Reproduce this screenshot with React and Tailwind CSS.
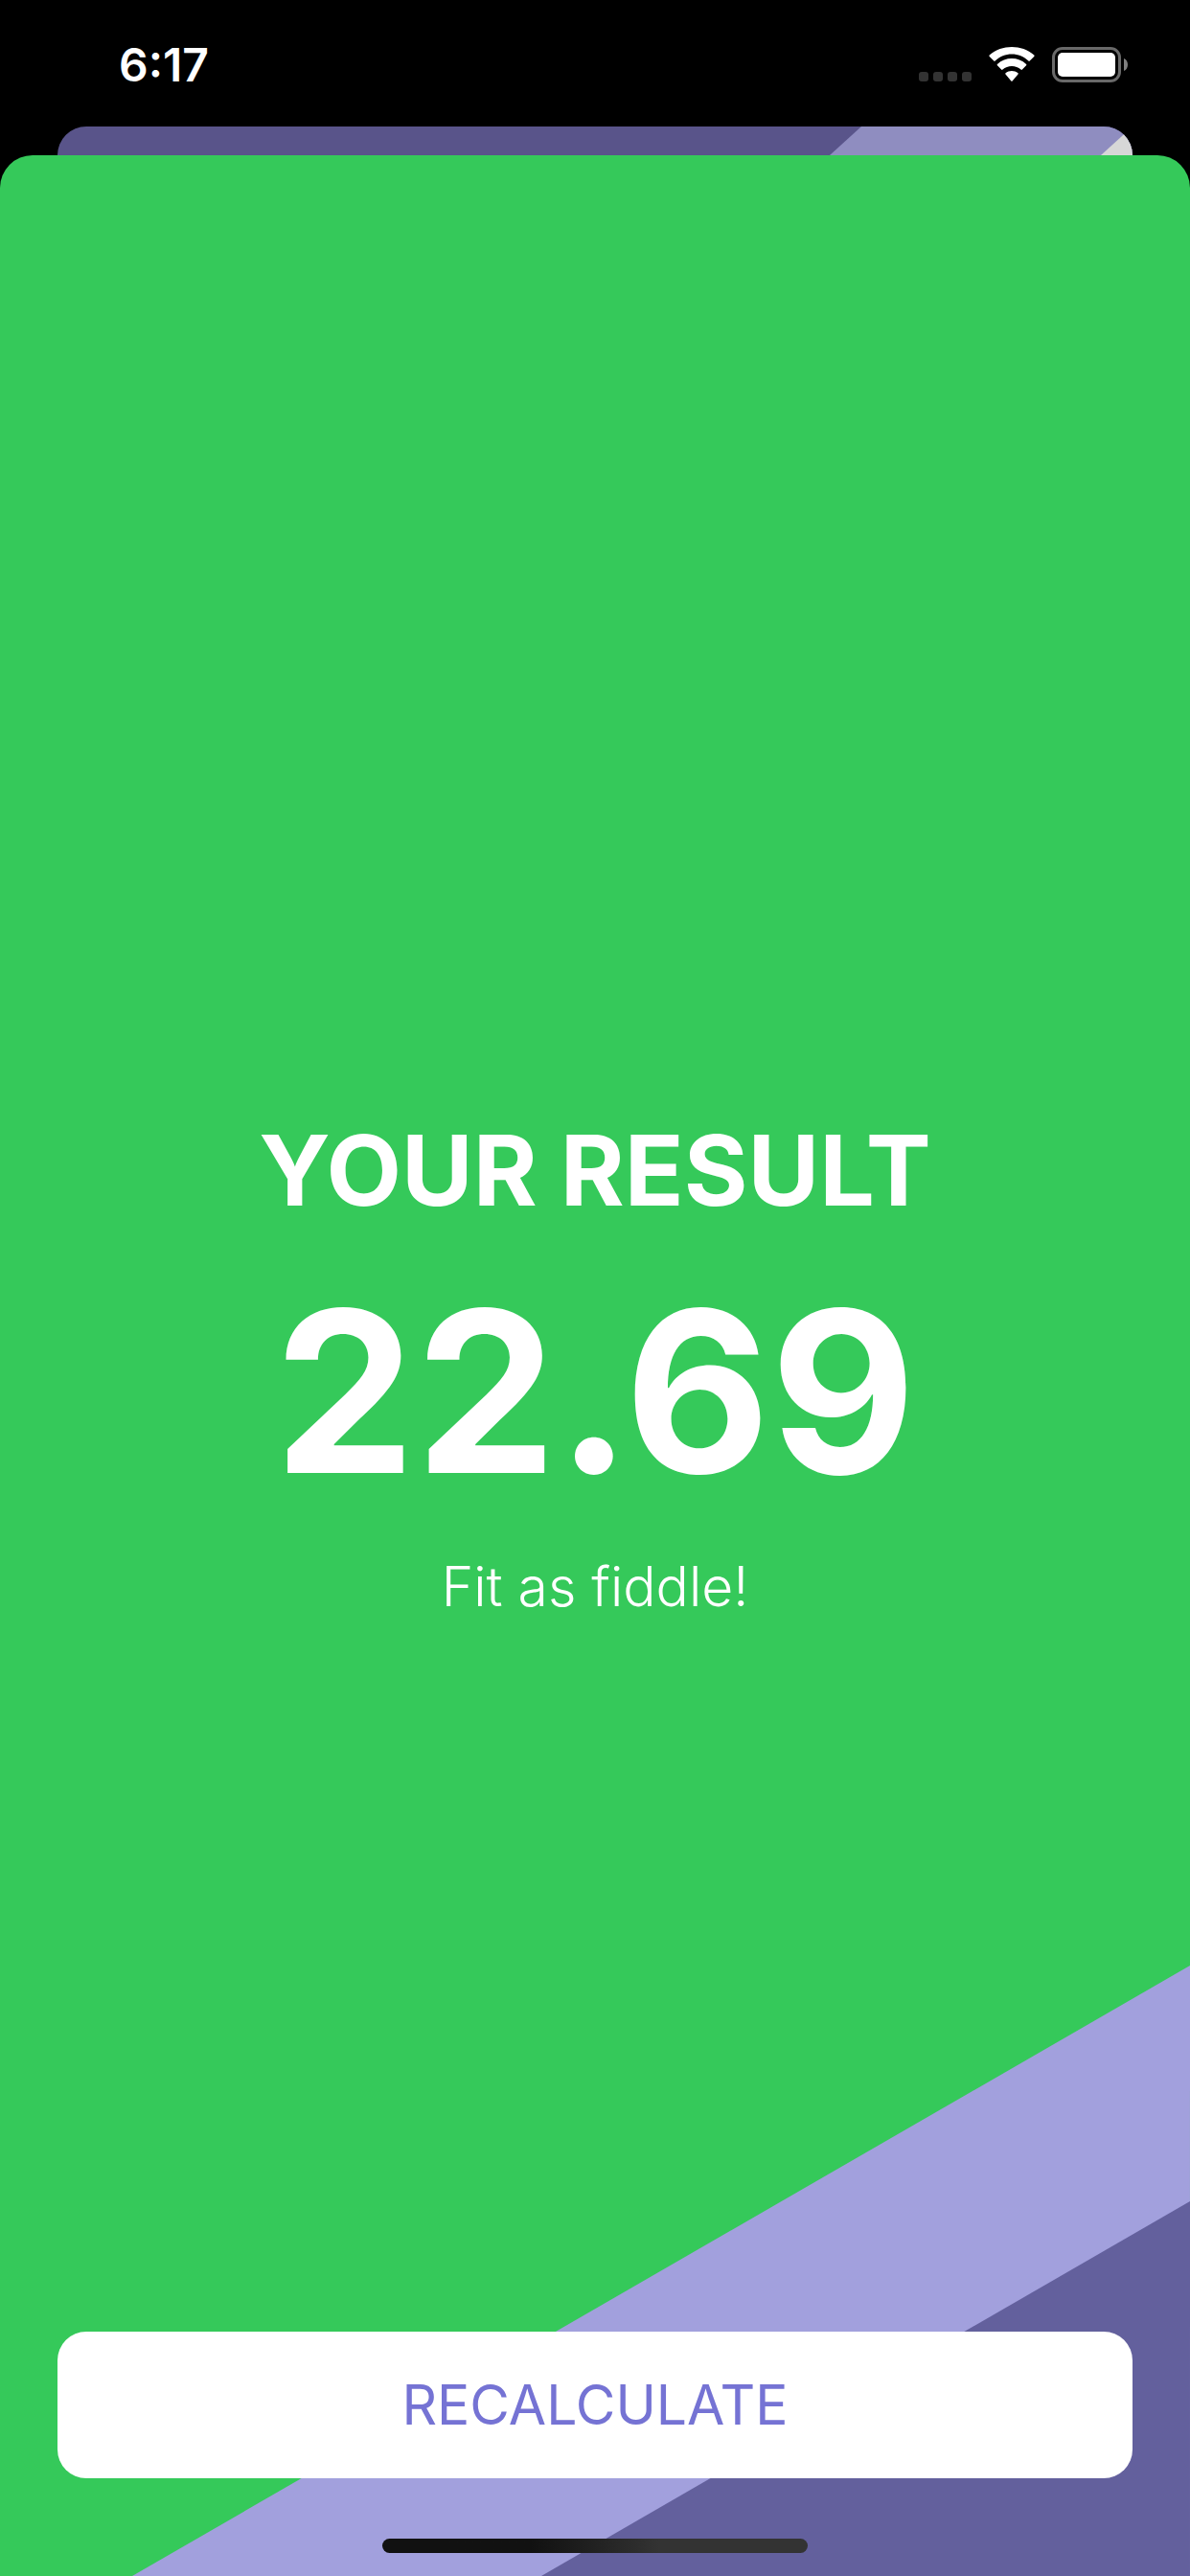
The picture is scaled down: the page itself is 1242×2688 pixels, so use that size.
function StatusBar() {
  return (
    <div className="flex h-33 items-start justify-between pt-12 pr-16 pl-31 text-white">
      <time className="text-[48px] leading-10 font-semibold">6:17</time>
      <div className="flex h-10 items-start gap-4">
        <div className="mt-[27px] mr-0.5 flex gap-[5px]" aria-hidden="true">
          <span className="size-2.5 rounded-[3px] bg-[#333333]" />
          <span className="size-2.5 rounded-[3px] bg-[#333333]" />
          <span className="size-2.5 rounded-[3px] bg-[#333333]" />
          <span className="size-2.5 rounded-[3px] bg-[#333333]" />
        </div>
        <svg className="mt-px h-9 w-12" viewBox="0 0 48 36" fill="#fff" role="img" aria-label="Wi-Fi">
          <path d="M24 7.6c6.5 0 12.700 2.500 17.400 7 .4.4.9.4 1.300 0l4.600-4.700c.4-.4.4-1 0-1.400C34.300-2.800 13.700-2.800.7 8.500c-.4.4-.4 1 0 1.400l4.600 4.700c.4.4.9.4 1.300 0 4.700-4.500 10.900-7 17.400-7Z" />
          <path d="M24 19.900c3.500 0 6.900 1.300 9.500 3.700.4.4 1 .4 1.400 0l4.200-4.300c.4-.4.4-1 0-1.400-8.500-7.900-21.700-7.900-30.200 0-.4.4-.4 1 0 1.400l4.200 4.300c.4.4 1 .4 1.400 0 2.600-2.400 6-3.700 9.500-3.700Z" />
          <path d="M30.500 28.600c.4-.4.4-1 0-1.300-3.800-3.200-9.300-3.200-13 0-.4.400-.4 1 0 1.300l5.800 6.900c.4.4.9.4 1.300 0l5.900-6.900Z" />
        </svg>
        <svg className="mt-px ml-0.5 h-[37px] w-[80px]" viewBox="0 0 80 37" role="img" aria-label="Battery full">
          <rect x="1.500" y="1.500" width="69" height="34" rx="9.500" fill="none" stroke="#696969" strokeWidth="3" />
          <rect x="6" y="6" width="60" height="25" rx="5" fill="#fff" />
          <path d="M75 12c2.700 1.200 4 3.600 4 6.500s-1.300 5.300-4 6.500Z" fill="#808080" />
        </svg>
      </div>
    </div>
  );
}

function PreviousCard() {
  return (
    <div className="mx-15 flex h-15 justify-end overflow-hidden rounded-t-[30px] bg-[#59548a]">
      <svg className="h-15 w-[349px]" viewBox="0 0 349 60" aria-hidden="true">
        <path d="M349 0H66L0 60h349Z" fill="#8f8dc0" />
        <path d="M349 0 283 60h66Z" fill="#d7d7d7" />
      </svg>
    </div>
  );
}

function Stripes() {
  return (
    <svg
      className="absolute right-0 bottom-0 w-8/9"
      viewBox="0 0 1104 637"
      aria-hidden="true"
    >
      <path d="M0 637 1104 0v637Z" fill="#a2a0dd" />
      <path d="M427 637 1104 246v391Z" fill="#63609d" />
    </svg>
  );
}

export default function App() {
  return (
    <div className="flex min-h-screen flex-col bg-black font-['Inter','Liberation_Sans',sans-serif]">
      <StatusBar />
      <PreviousCard />
      <main className="relative -mt-7.5 grid flex-1 grid-rows-[1fr_auto_1fr] overflow-hidden rounded-t-[34px] bg-[#35c95a] px-15">
        <Stripes />
        <section className="relative row-start-2 flex flex-col items-center gap-7 text-center text-white">
          <h1 className="text-[102px] leading-[126px] font-bold">YOUR RESULT</h1>
          <p className="text-[234px] leading-[280px] font-bold">22.69</p>
          <p className="text-[57px] leading-[72px] font-light">Fit as fiddle!</p>
        </section>
        <footer className="relative row-start-3 flex flex-col items-center justify-end pb-6">
          <button
            type="button"
            className="h-[153px] w-full rounded-[30px] bg-white text-[57px] leading-[72px] text-[#7573d4]"
          >
            RECALCULATE
          </button>
          <div className="mt-[63px] h-[15px] w-[444px] rounded-full bg-linear-to-r from-[#111111] from-35% to-[#333333] to-65%" />
        </footer>
      </main>
    </div>
  );
}
